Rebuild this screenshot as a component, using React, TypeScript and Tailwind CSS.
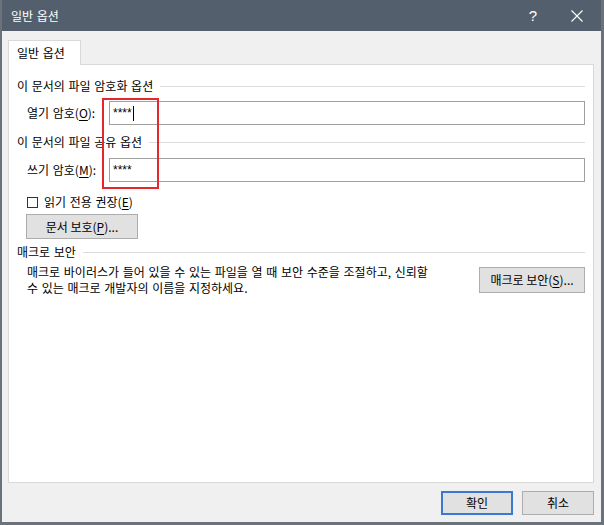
import React from "react";

const font = { fontFamily: '"Noto Sans CJK KR", "Noto Sans", sans-serif' };

function U({ children }: { children: React.ReactNode }) {
  return <span className="underline underline-offset-2">{children}</span>;
}

function Header({ children }: { children: React.ReactNode }) {
  return (
    <div className="flex items-center h-[16px]">
      <span className="leading-[16px] whitespace-nowrap">{children}</span>
      <div className="flex-1 h-px bg-[#dcdcdc] ml-[7px] mt-[1px]" />
    </div>
  );
}

export default function App() {
  return (
    <div
      className="relative w-[604px] h-[525px] flex flex-col bg-[#f0f0f0] border-l-2 border-r-[3px] border-b-[3px] border-[#6a727c] text-[12px] text-black overflow-hidden [word-spacing:1px]"
      style={font}
    >
      {/* Title bar */}
      <div className="h-[31px] shrink-0 bg-[#535f6d] flex items-center text-white -ml-[2px] -mr-[3px]">
        <span className="ml-[11px] text-[12px] leading-none">일반 옵션</span>
        <div className="flex-1" />
        <span className="text-[15px] leading-none mr-[34px] font-light" style={{ fontFamily: '"Liberation Sans", sans-serif' }}>?</span>
        <svg width="12" height="12" viewBox="0 0 12 12" className="mr-[21px]">
          <path d="M0.5 0.5 L11.5 11.5 M11.5 0.5 L0.5 11.5" stroke="white" strokeWidth="1.1" />
        </svg>
      </div>

      {/* Body */}
      <div className="flex flex-col pl-[6px] pr-[7px] pt-[9px]">
        <div className="relative z-10 w-[73px] h-[25px] -mb-px bg-white border border-b-0 border-[#d9d9d9] flex items-center pl-[8px]">
          <span className="leading-[16px]">일반 옵션</span>
        </div>
        <div className="h-[419px] bg-white border border-[#d9d9d9] flex flex-col pl-[8px] pr-[8px] pt-[13px]">
          <Header>이 문서의 파일 암호화 옵션</Header>
          <div className="flex items-center mt-[7px] h-[24px]">
            <span className="ml-[10px] w-[82px] leading-[16px]">
              열기 암호(<U>O</U>):
            </span>
            <div className="flex-1 h-[24px] border border-[#a0a0a0] flex items-center pl-[3px]">
              <span className="leading-[16px]" style={{ fontFamily: '"Liberation Sans", sans-serif' }}>****</span>
              <span className="w-px h-[15px] bg-black ml-[1px]" />
            </div>
          </div>

          <div className="mt-[9px]">
            <Header>이 문서의 파일 공유 옵션</Header>
          </div>
          <div className="flex items-center mt-[8px] h-[24px]">
            <span className="ml-[10px] w-[82px] leading-[16px]">
              쓰기 암호(<U>M</U>):
            </span>
            <div className="flex-1 h-[24px] border border-[#a0a0a0] flex items-center pl-[3px]">
              <span className="leading-[16px]" style={{ fontFamily: '"Liberation Sans", sans-serif' }}>****</span>
            </div>
          </div>

          <div className="flex items-center mt-[12px] h-[16px] ml-[10px]">
            <div className="w-[11px] h-[11px] border border-[#333333] bg-white" />
            <span className="ml-[6px] leading-[16px]">
              읽기 전용 권장(<U>E</U>)
            </span>
          </div>

          <button className="mt-[4px] ml-[9px] w-[112px] h-[25px] bg-[#e1e1e1] border border-[#adadad] flex items-center justify-center leading-[16px]">
            문서 보호(<U>P</U>)...
          </button>

          <div className="mt-[5px]">
            <Header>매크로 보안</Header>
          </div>
          <div className="flex items-start mt-[4px]">
            <p className="ml-[10px] leading-[16px] w-[445px] whitespace-nowrap">
              매크로 바이러스가 들어 있을 수 있는 파일을 열 때 보안 수준을 조절하고, 신뢰할
              <br />
              수 있는 매크로 개발자의 이름을 지정하세요.
            </p>
            <div className="flex-1" />
            <button className="mt-[3px] w-[106px] h-[26px] bg-[#e1e1e1] border border-[#adadad] flex items-center justify-center leading-[16px]">
              매크로 보안(<U>S</U>)...
            </button>
          </div>
        </div>

        {/* Footer */}
        <div className="flex justify-end gap-[9px] mt-[8px]">
          <button className="w-[72px] h-[24px] bg-[#e1e1e1] border-2 border-[#3a78d4] flex items-center justify-center leading-[16px]">
            확인
          </button>
          <button className="w-[72px] h-[24px] bg-[#e1e1e1] border border-[#adadad] flex items-center justify-center leading-[16px]">
            취소
          </button>
        </div>
      </div>

      {/* Red annotation box */}
      <div className="absolute left-[100px] top-[98px] w-[57px] h-[91px] border-2 border-[#e5262d] pointer-events-none" />
    </div>
  );
}
